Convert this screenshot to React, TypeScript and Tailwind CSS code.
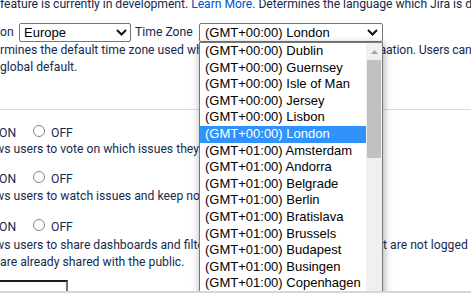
const body = "font-['Roboto',sans-serif] text-[12.2px] leading-[17px] text-[#172b4d]";
const arial = "font-['Liberation_Sans',Arial,sans-serif] text-[13px] text-black";

const zones: [string, string][] = [
  ["00:00", "Dublin"],
  ["00:00", "Guernsey"],
  ["00:00", "Isle of Man"],
  ["00:00", "Jersey"],
  ["00:00", "Lisbon"],
  ["00:00", "London"],
  ["01:00", "Amsterdam"],
  ["01:00", "Andorra"],
  ["01:00", "Belgrade"],
  ["01:00", "Berlin"],
  ["01:00", "Bratislava"],
  ["01:00", "Brussels"],
  ["01:00", "Budapest"],
  ["01:00", "Busingen"],
  ["01:00", "Copenhagen"],
  ["01:00", "Gibraltar"],
];

function Chevron() {
  return (
    <svg width="11" height="7" viewBox="0 0 11 7" className="shrink-0">
      <polyline points="1,1 5.5,5.5 10,1" fill="none" stroke="#111" strokeWidth="2" />
    </svg>
  );
}

function Radio() {
  return <span className="block w-[12px] h-[12px] rounded-full border border-[#858585] bg-white shrink-0" />;
}

function OnOff({ className = "" }: { className?: string }) {
  return (
    <div className={"flex items-start h-[16px] whitespace-nowrap " + className}>
      <span className="inline-block w-[34px] -ml-[1px]">ON</span>
      <Radio />
      <span className="ml-[6px]">OFF</span>
    </div>
  );
}

export default function App() {
  return (
    <div className="w-[471px] h-[293px] overflow-hidden bg-white flex flex-col">
      <div className={"relative h-[291px] overflow-hidden " + body}>
        <div className="flex flex-col">
          <div className="-mt-[4px] h-[17px] whitespace-nowrap tracking-[-0.05px]">
            feature is currently in development. <span className="text-[#0052cc]">Learn More.</span> Determines the language which Jira is displayed in.
          </div>
          <div className="mt-[10px] h-[19px] flex items-center whitespace-nowrap">
            <span className="inline-block w-[19px]">on</span>
            <div className={"w-[112px] h-[19px] border border-[#767676] rounded-[2px] bg-white flex items-center pl-[4px] pr-[3px] justify-between " + arial}>
              <span>Europe</span>
              <Chevron />
            </div>
            <span className="inline-block w-[64px] ml-[4px]">Time Zone</span>
            <div className={"w-[184px] h-[19px] border border-[#767676] rounded-[2px] bg-white flex items-center pl-[5px] pr-[4px] justify-between " + arial}>
              <span>(GMT+00:00) London</span>
              <Chevron />
            </div>
          </div>
          <div className="h-[17px] grid grid-cols-[386px_1fr] whitespace-nowrap overflow-hidden">
            <span className="overflow-hidden">rmines the default time zone used when displaying dates and times in an email notification.</span>
            <span className="tracking-[-0.1px]">ation. Users can select their own time zone</span>
          </div>
          <div className="h-[17px] whitespace-nowrap">global default.</div>
          <div className="mt-[33px] h-px bg-[#dcdcdc]" />

          <OnOff className="mt-[15px]" />
          <div className="h-[17px] whitespace-nowrap -ml-[5px]">ws users to vote on which issues they want fixed.</div>

          <OnOff className="mt-[13px]" />
          <div className="mt-[1px] h-[17px] whitespace-nowrap -ml-[5px]">ws users to watch issues and keep notified about updates.</div>

          <OnOff className="mt-[14px]" />
          <div className="mt-[2px] h-[17px] grid grid-cols-[383px_1fr] whitespace-nowrap overflow-hidden">
            <span className="overflow-hidden -ml-[5px]">ws users to share dashboards and filters with users that</span>
            <span>t are not logged in.</span>
          </div>
          <div className="h-[17px] whitespace-nowrap">are already shared with the public.</div>

          <div className="mt-[9px] w-[68px] h-[11px] border-t-2 border-r-2 border-t-[#1c1c1c] border-r-[#707070]" />
        </div>

        <div className="absolute left-[199px] top-[42px] w-[184px] h-[270px] border border-[#7a7a7a] bg-white flex shadow-[1px_2px_8px_rgba(0,0,0,0.35)]">
          <div className={"flex-1 flex flex-col " + arial}>
            {zones.map(([off, city]) => {
              const sel = city === "London";
              return (
                <div
                  key={city}
                  className={
                    "h-[16.6px] leading-[16.6px] pl-[5px] whitespace-nowrap shrink-0 " +
                    (sel ? "bg-[#3093fb] text-white" : "")
                  }
                >
                  (GMT+{off}) {city}
                </div>
              );
            })}
          </div>
          <div className="w-[16px] bg-[#f0f0f0] flex flex-col">
            <div className="h-[17px] flex items-center justify-center pt-[1px]">
              <svg width="7" height="4" viewBox="0 0 7 4">
                <polygon points="0,4 3.5,0 7,4" fill="#a3a3a3" />
              </svg>
            </div>
            <div className="ml-[1px] w-[14px] h-[98px] bg-[#c1c1c1]" />
          </div>
        </div>
      </div>
      <div className="h-[2px] bg-[#d6d6d6]" />
    </div>
  );
}
